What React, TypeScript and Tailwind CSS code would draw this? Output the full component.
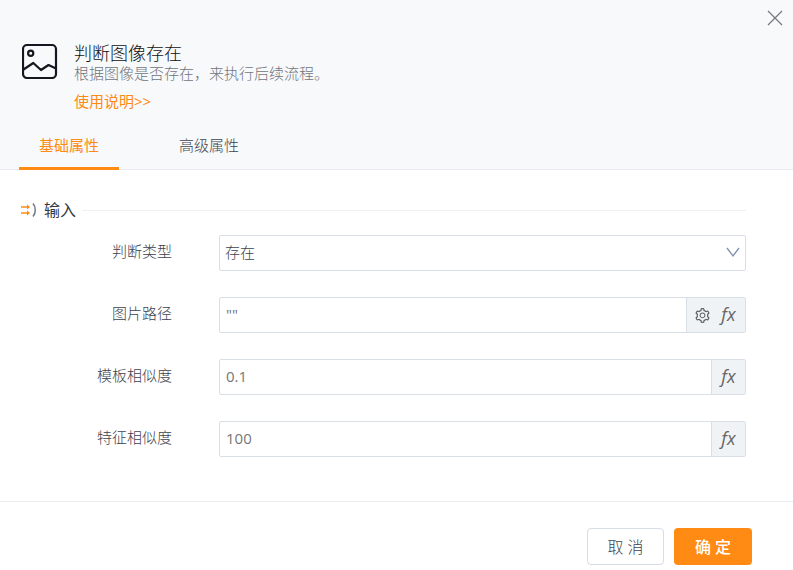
import React, { useState } from 'react';
import { AiOutlineSetting } from 'react-icons/ai';

const FxButton = () => (
  <button type="button" aria-label="fx" className="w-[25px] h-6 flex items-center justify-center pb-0.5 text-lg leading-6 italic font-normal font-['Open_Sans',sans-serif] text-[#666]">
    fx
  </button>
);

const ImageIcon = () => (
  <svg width="36" height="36" viewBox="0 0 36 36" fill="none" stroke="#15161f" strokeWidth="2.200" strokeLinejoin="round">
    <rect x="1" y="2" width="33" height="33" rx="4" />
    <circle cx="8.700" cy="10.300" r="2.600" />
    <path d="M1.500 26.500L11.300 20l7.700 7 7.500-5 7.500 3.500" />
  </svg>
);

const InputIcon = () => (
  <svg width="17" height="16" viewBox="0 0 17 16" fill="none">
    <path d="M1 5h8M1 11h8" stroke="#ff8a14" strokeWidth="1.500" />
    <path d="M7 2.500L10 5 7 7.500zM7 8.500l3 2.500-3 2.500z" fill="#ff8a14" />
    <path d="M13 1.500c3 3.500 3 9.500 0 13" stroke="#74787e" strokeWidth="1.500" />
  </svg>
);

const fields = [
  { id: 'path', label: '图片路径', value: '""', gear: true },
  { id: 'template', label: '模板相似度', value: '0.1', gear: false },
  { id: 'feature', label: '特征相似度', value: '100', gear: false },
];

const tabs = ['基础属性', '高级属性'];

const App = () => {
  const [activeTab, setActiveTab] = useState(0);

  return (
    <div className="relative bg-white text-[#3c434d] text-[15px] font-light font-['Open_Sans','Noto_Sans_CJK_SC',sans-serif]">
      <button type="button" aria-label="关闭" className="absolute top-2.5 right-2.5">
        <svg width="16" height="16" viewBox="0 0 16 16" stroke="#74777d" strokeWidth="1.200">
          <path d="M1 1l14 14M15 1L1 15" />
        </svg>
      </button>

      <header className="bg-[#f8f9fb] border-b border-[#e9ebf0] pt-[43px]">
        <div className="flex items-start gap-4 pl-[22px]">
          <ImageIcon />
          <div>
            <h1 className="text-lg leading-5 text-[#111]">判断图像存在</h1>
            <p className="leading-5 text-[#70757c]">根据图像是否存在，来执行后续流程。</p>
            <a href="#help" className="block mt-2 leading-5 font-normal text-[#ff8a14]">使用说明&gt;&gt;</a>
          </div>
        </div>
        <div role="tablist" className="flex gap-10 mt-3 pl-[19px] -mb-px">
          {tabs.map((tab, index) => (
            <button
              key={tab}
              type="button"
              role="tab"
              aria-selected={index === activeTab}
              onClick={() => setActiveTab(index)}
              className={`w-[100px] h-[47px] border-b-3 ${index === activeTab ? 'border-[#ff8a14] text-[#ff8a14] font-normal' : 'border-transparent'}`}
            >
              {tab}
            </button>
          ))}
        </div>
      </header>

      <main className="pl-5 pr-[47px] pt-7 pb-11">
        <div className="flex items-center h-6 mb-[13px]">
          <InputIcon />
          <h2 className="text-base font-normal text-[#333840] ml-[7px] mr-1.5">输入</h2>
          <div className="flex-1 h-px bg-[#f0f0f1]" />
        </div>

        <form className="flex flex-col gap-[26px]">
          <div className="flex items-center">
            <label htmlFor="type" className="w-[152px] mr-[47px] pb-[3px] text-right">判断类型</label>
            <div className="relative flex-1">
              <select id="type" className="block appearance-none w-full h-9 px-[5px] pb-0.5 bg-white border border-[#d9dcea] rounded-xs">
                <option>存在</option>
                <option>不存在</option>
              </select>
              <svg className="absolute right-1.5 top-3 pointer-events-none" width="14" height="12" viewBox="0 0 14 12" fill="none" stroke="#8190ae" strokeWidth="1.300">
                <path d="M1 1l6 8 6-8" />
              </svg>
            </div>
          </div>

          {fields.map((field) => (
            <div key={field.id} className="flex items-center">
              <label htmlFor={field.id} className="w-[152px] mr-[47px] pb-[3px] text-right">{field.label}</label>
              <div className="flex flex-1 h-9 border border-[#d9dfe7] rounded-xs overflow-hidden">
                <input id={field.id} type="text" defaultValue={field.value} className="flex-1 min-w-0 px-1.5 pb-0.5 font-normal text-[#777] outline-none" />
                <div className="flex items-center gap-0.5 px-1 bg-[#f0f3f6] border-l border-[#d9dfe7]">
                  {field.gear && (
                    <button type="button" aria-label="设置" className="w-[23px] flex justify-center text-[#5c5f64]">
                      <AiOutlineSetting size={17} />
                    </button>
                  )}
                  <FxButton />
                </div>
              </div>
            </div>
          ))}
        </form>
      </main>

      <footer className="flex justify-end gap-2.5 pt-[26px] pr-[41px] pb-[5px] border-t border-[#ebecef] text-base">
        <button type="button" className="w-[77px] h-[37px] border border-[#d5dde8] rounded-sm">取 消</button>
        <button type="button" className="w-[78px] h-[37px] bg-[#ff8a14] text-white font-medium rounded-sm">确 定</button>
      </footer>
    </div>
  );
};

export default App;
